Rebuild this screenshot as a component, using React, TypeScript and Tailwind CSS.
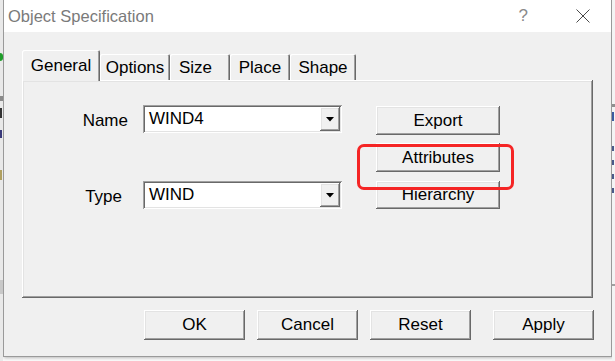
import React from "react";

const raised =
    "shadow-[inset_-1px_-1px_0_#696969,inset_1px_1px_0_#ffffff,inset_-2px_-2px_0_#a0a0a0,inset_2px_2px_0_#e3e3e3]";
const sunken =
    "shadow-[inset_1px_1px_0_#a0a0a0,inset_-1px_-1px_0_#ffffff,inset_2px_2px_0_#696969,inset_-2px_-2px_0_#e3e3e3]";

function Combo({value}: { value: string }) {
    return (
        <div className={`relative w-[199px] h-[28px] bg-white ${sunken}`}>
            <span className="absolute left-[6px] top-[3px] text-[17px] leading-[22px] text-black">{value}</span>
            <div
                className={`absolute right-[2px] top-[2px] w-[20px] h-[24px] bg-[#f0f0f0] flex items-center justify-center ${raised}`}>
                <svg width="8" height="5" viewBox="0 0 8 5">
                    <polygon points="0,0 8,0 4,4.5" fill="#000"/>
                </svg>
            </div>
        </div>
    );
}

function Button({label, className = ""}: { label: string; className?: string }) {
    return (
        <div
            className={`flex items-center justify-center bg-[#f0f0f0] text-[17px] text-black ${raised} ${className}`}>
            {label}
        </div>
    );
}

export default function App() {
    const tabs = [
        {label: "Options", w: "w-[70px]"},
        {label: "Size", w: "w-[60px] justify-start pl-[9px]"},
        {label: "Place", w: "w-[60px]"},
        {label: "Shape", w: "w-[66px]"},
    ];

    return (
        <div className="relative w-[615px] h-[361px] overflow-hidden bg-[#fafafa] font-['Liberation_Sans',Arial,sans-serif]">
            {/* bits of the window behind */}
            <div className="absolute left-0 top-0 w-[3px] h-[361px] bg-[#e9e9e9]">
                <div className="absolute left-[-3px] top-[53px] w-[6px] h-[8px] rounded-full bg-[#1f9d2a]"/>
                <div className="absolute left-0 top-[96px] w-[3px] h-[5px] bg-[#8a8a8a]"/>
                <div className="absolute left-0 top-[108px] w-[2px] h-[10px] bg-[#333]"/>
                <div className="absolute left-0 top-[130px] w-[2px] h-[8px] bg-[#3a3a7a]"/>
                <div className="absolute left-0 top-[170px] w-[2px] h-[10px] bg-[#b0a060]"/>
                <div className="absolute left-0 top-[280px] w-[3px] h-[14px] bg-[#c8c8c8]"/>
            </div>
            <div className="absolute right-0 top-0 w-[3px] h-[361px] bg-[#f4f4f4]">
                <div className="absolute left-0 top-[104px] w-[3px] h-[3px] bg-[#909090]"/>
                <div className="absolute left-0 top-[112px] w-[2px] h-[9px] bg-[#3b5ba0]"/>
                <div className="absolute left-0 top-[146px] w-[2px] h-[5px] bg-[#4a5a8a]"/>
                <div className="absolute left-0 top-[160px] w-[2px] h-[5px] bg-[#4a5a8a]"/>
                <div className="absolute left-0 top-[174px] w-[2px] h-[5px] bg-[#4a5a8a]"/>
                <div className="absolute left-0 top-[188px] w-[2px] h-[5px] bg-[#4a5a8a]"/>
                <div className="absolute left-0 top-[284px] w-[3px] h-[2px] bg-[#a0a0a0]"/>
            </div>

            {/* dialog */}
            <div
                className="ml-[3px] w-[609px] h-[357px] flex flex-col bg-[#f0f0f0] border-x border-b border-[#9a9a9a] shadow-[1px_1px_3px_rgba(0,0,0,0.25)]">
                <div className="h-[32px] bg-white flex items-center pl-[4px] shrink-0">
                    <span className="text-[16.5px] text-[#7a7a7a]">Object Specification</span>
                    <span className="ml-auto text-[17px] text-[#8a8a8a] mr-[48px]">?</span>
                    <svg width="14" height="14" viewBox="0 0 14 14" className="mr-[21px]">
                        <line x1="0.5" y1="0.5" x2="13.5" y2="13.5" stroke="#4a4a4a" strokeWidth="1"/>
                        <line x1="13.5" y1="0.5" x2="0.5" y2="13.5" stroke="#4a4a4a" strokeWidth="1"/>
                    </svg>
                </div>

                <div className="pt-[18px] flex flex-col">
                    <div className="ml-[18px] h-[30px] flex items-end">
                        <div
                            className="relative z-10 -mb-px w-[78px] h-[31px] pt-[1px] bg-[#f0f0f0] rounded-t-[2px] flex items-center justify-center text-[17px] text-black shadow-[inset_1px_1px_0_#ffffff,inset_-1px_0_0_#696969,inset_-2px_0_0_#a0a0a0]">
                            General
                        </div>
                        {tabs.map((t) => (
                            <div key={t.label}
                                 className={`h-[26px] pt-[2px] rounded-t-[2px] flex items-center justify-center text-[17px] text-black shadow-[inset_1px_1px_0_#ffffff,inset_-1px_0_0_#696969,inset_-2px_0_0_#a0a0a0] ${t.w}`}>
                                {t.label}
                            </div>
                        ))}
                    </div>

                    <div className={`relative ml-[18px] w-[571px] h-[218px] flex pt-[25px] ${raised}`}>
                        <div className="flex flex-col gap-[48px]">
                            <div className="flex items-center h-[28px]">
                                <span className="w-[106px] text-right text-[17px] text-black mt-[4px]">Name</span>
                                <div className="ml-[15px]"><Combo value="WIND4"/></div>
                            </div>
                            <div className="flex items-center h-[28px]">
                                <span className="w-[100px] text-right text-[17px] text-black mt-[4px]">Type</span>
                                <div className="ml-[21px]"><Combo value="WIND"/></div>
                            </div>
                        </div>
                        <div className="ml-[34px] pt-px flex flex-col gap-[8px]">
                            <Button label="Export" className="w-[124px] h-[29px]"/>
                            <Button label="Attributes" className="w-[124px] h-[29px]"/>
                            <Button label="Hierarchy" className="w-[124px] h-[28px] mt-px"/>
                        </div>

                        <div
                            className="absolute left-[335px] top-[64px] w-[157px] h-[46px] border-[3px] border-[#f52525] rounded-[7px]"/>
                    </div>

                    <div className="mt-[12px] ml-[140px] flex gap-[12px]">
                        <Button label="OK" className="w-[101px] h-[30px]"/>
                        <Button label="Cancel" className="w-[101px] h-[30px]"/>
                        <Button label="Reset" className="w-[101px] h-[30px]"/>
                        <Button label="Apply" className="w-[101px] h-[30px] ml-[10px]"/>
                    </div>
                </div>
            </div>
        </div>
    );
}
